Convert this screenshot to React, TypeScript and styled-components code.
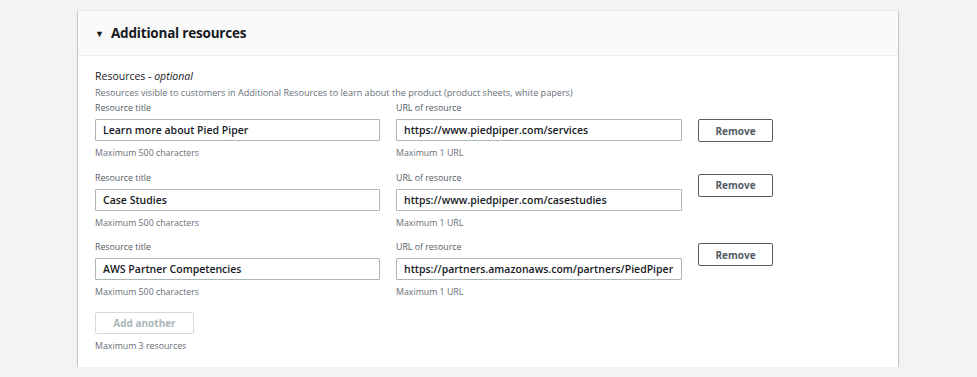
import React from "react";
import styled, { createGlobalStyle } from "styled-components";

const GlobalStyle = createGlobalStyle`
  html, body {
    margin: 0;
    padding: 0;
    background: #f2f3f3;
    font-family: "Open Sans", "Liberation Sans", sans-serif;
    color: #16191f;
  }
  * { box-sizing: border-box; }
`;

type Resource = { title: string; url: string };

const resources: Resource[] = [
  { title: "Learn more about Pied Piper", url: "https://www.piedpiper.com/services" },
  { title: "Case Studies", url: "https://www.piedpiper.com/casestudies" },
  { title: "AWS Partner Competencies", url: "https://partners.amazonaws.com/partners/PiedPiper" },
];

function App(): JSX.Element {
  return (
    <>
      <GlobalStyle />
      <Page>
        <Card>
          <Header>
            <Caret>▼</Caret>
            <h2>Additional resources</h2>
          </Header>
          <Body>
            <FieldTitle>
              Resources - <em>optional</em>
            </FieldTitle>
            <Description>
              Resources visible to customers in Additional Resources to learn about the product (product sheets, white papers)
            </Description>
            <Rows>
              {resources.map((r, i) => (
                <Row key={r.title}>
                  <Field>
                    <Label>Resource title</Label>
                    <Input value={r.title} readOnly />
                    <Hint>Maximum 500 characters</Hint>
                  </Field>
                  <Field>
                    <Label>URL of resource</Label>
                    <Input value={r.url} readOnly />
                    <Hint>Maximum 1 URL</Hint>
                  </Field>
                  <RemoveButton $first={i === 0}>Remove</RemoveButton>
                </Row>
              ))}
            </Rows>
            <AddButton disabled>Add another</AddButton>
            <Hint>Maximum 3 resources</Hint>
          </Body>
        </Card>
      </Page>
    </>
  );
}

const Page = styled.div`
  padding: 10px 0 0 78px;
`;

const Card = styled.section`
  width: 820px;
  background: #fff;
  border-top: 1px solid #eaeded;
  box-shadow: 0 1px 1px 0 rgba(0, 28, 36, 0.3), 1px 1px 1px 0 rgba(0, 28, 36, 0.15),
    -1px 1px 1px 0 rgba(0, 28, 36, 0.15);
`;

const Header = styled.header`
  display: flex;
  align-items: center;
  height: 45px;
  padding-left: 17px;
  background: #fafafa;
  border-bottom: 1px solid #eaeded;
  h2 {
    margin: 0;
    font-size: 13.5px;
    font-weight: 700;
    letter-spacing: -0.2px;
    color: #16191f;
  }
`;

const Caret = styled.span`
  font-size: 9px;
  width: 16px;
  color: #16191f;
`;

const Body = styled.div`
  padding: 12px 0 14px 17px;
`;

const FieldTitle = styled.div`
  font-size: 10.5px;
  line-height: 16px;
  em {
    font-style: italic;
  }
`;

const Description = styled.div`
  margin: 2px 0 1px;
  font-size: 9.1px;
  line-height: 14px;
  color: #687078;
`;

const Rows = styled.div`
  display: flex;
  flex-direction: column;
  gap: 10.5px;
`;

const Row = styled.div`
  display: grid;
  grid-template-columns: 285px 286px 75px;
  column-gap: 16px;
  align-items: start;
`;

const Field = styled.div`
  display: flex;
  flex-direction: column;
`;

const Label = styled.label`
  font-size: 8.8px;
  line-height: 14px;
  margin-bottom: 4px;
  color: #545b64;
`;

const Input = styled.input`
  height: 22px;
  padding: 0 7px;
  border: 1px solid #aab7b8;
  border-radius: 1px;
  font-family: inherit;
  font-size: 10.5px;
  font-weight: 600;
  color: #16191f;
  outline: none;
  background: #fff;
`;

const Hint = styled.div`
  margin-top: 5px;
  font-size: 8.8px;
  line-height: 14px;
  color: #687078;
`;

const RemoveButton = styled.button<{ $first: boolean }>`
  margin-top: ${(p) => (p.$first ? "18px" : "3px")};
  height: 23px;
  border: 1px solid #545b64;
  border-radius: 2px;
  background: #fff;
  font-family: inherit;
  font-size: 10px;
  font-weight: 700;
  color: #545b64;
`;

const AddButton = styled.button`
  display: block;
  margin-top: 13px;
  width: 99px;
  height: 22px;
  border: 1px solid #d5dbdb;
  border-radius: 2px;
  background: #fff;
  font-family: inherit;
  font-size: 10px;
  font-weight: 700;
  color: #aab7b8;
`;

export default App;
